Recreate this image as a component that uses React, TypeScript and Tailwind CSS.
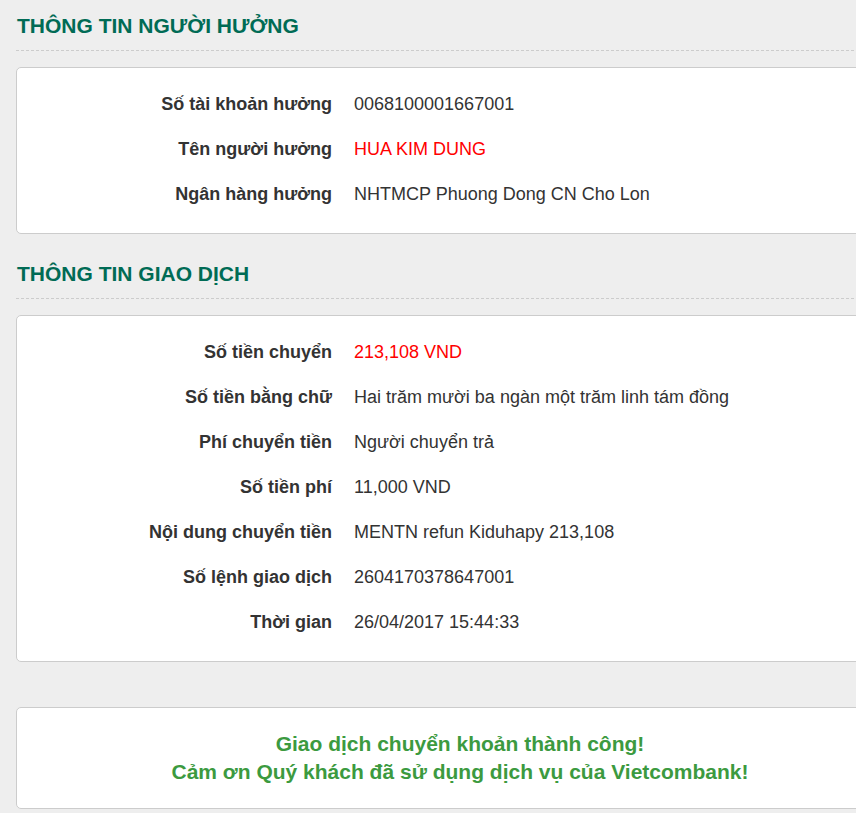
import React from "react";

const font = { fontFamily: '"Liberation Sans", Arial, sans-serif' };

function Heading({ children, first }: { children: React.ReactNode; first?: boolean }) {
  return (
    <div className={`${first ? "pt-[14px]" : "pt-[28px]"} pb-[12px] border-b border-dashed border-[#cccccc]`}>
      <h2 className="text-[21px] leading-[24px] font-bold text-[#006b55] pl-px">{children}</h2>
    </div>
  );
}

type Row = { label: string; value: string; red?: boolean };

function Card({ rows }: { rows: Row[] }) {
  return (
    <div className="mt-4 bg-white border border-[#cccccc] rounded-[5px] pt-[13px] pb-[17px]">
      {rows.map((r) => (
        <div key={r.label} className="flex items-center h-[45px] text-[18px] leading-[22px]">
          <div className="w-[315px] text-right font-bold text-[#333333]">{r.label}</div>
          <div className={`pl-[22px] ${r.red ? "text-[#ff0000]" : "text-[#333333]"}`}>{r.value}</div>
        </div>
      ))}
    </div>
  );
}

export default function App() {
  return (
    <div className="w-[856px] h-[813px] overflow-hidden bg-[#eeeeee]" style={font}>
      <div className="w-[920px] px-4">
        <Heading first>THÔNG TIN NGƯỜI HƯỞNG</Heading>
        <Card
          rows={[
            { label: "Số tài khoản hưởng", value: "0068100001667001" },
            { label: "Tên người hưởng", value: "HUA KIM DUNG", red: true },
            { label: "Ngân hàng hưởng", value: "NHTMCP Phuong Dong CN Cho Lon" },
          ]}
        />
        <Heading>THÔNG TIN GIAO DỊCH</Heading>
        <Card
          rows={[
            { label: "Số tiền chuyển", value: "213,108 VND", red: true },
            { label: "Số tiền bằng chữ", value: "Hai trăm mười ba ngàn một trăm linh tám đồng" },
            { label: "Phí chuyển tiền", value: "Người chuyển trả" },
            { label: "Số tiền phí", value: "11,000 VND" },
            { label: "Nội dung chuyển tiền", value: "MENTN refun Kiduhapy 213,108" },
            { label: "Số lệnh giao dịch", value: "2604170378647001" },
            { label: "Thời gian", value: "26/04/2017 15:44:33" },
          ]}
        />
        <div className="mt-[45px] bg-white border border-[#cccccc] rounded-[5px] py-[22px] text-center text-[21px] leading-[28px] font-bold text-[#3c9a3f]">
          <div>Giao dịch chuyển khoản thành công!</div>
          <div>Cảm ơn Quý khách đã sử dụng dịch vụ của Vietcombank!</div>
        </div>
      </div>
    </div>
  );
}
